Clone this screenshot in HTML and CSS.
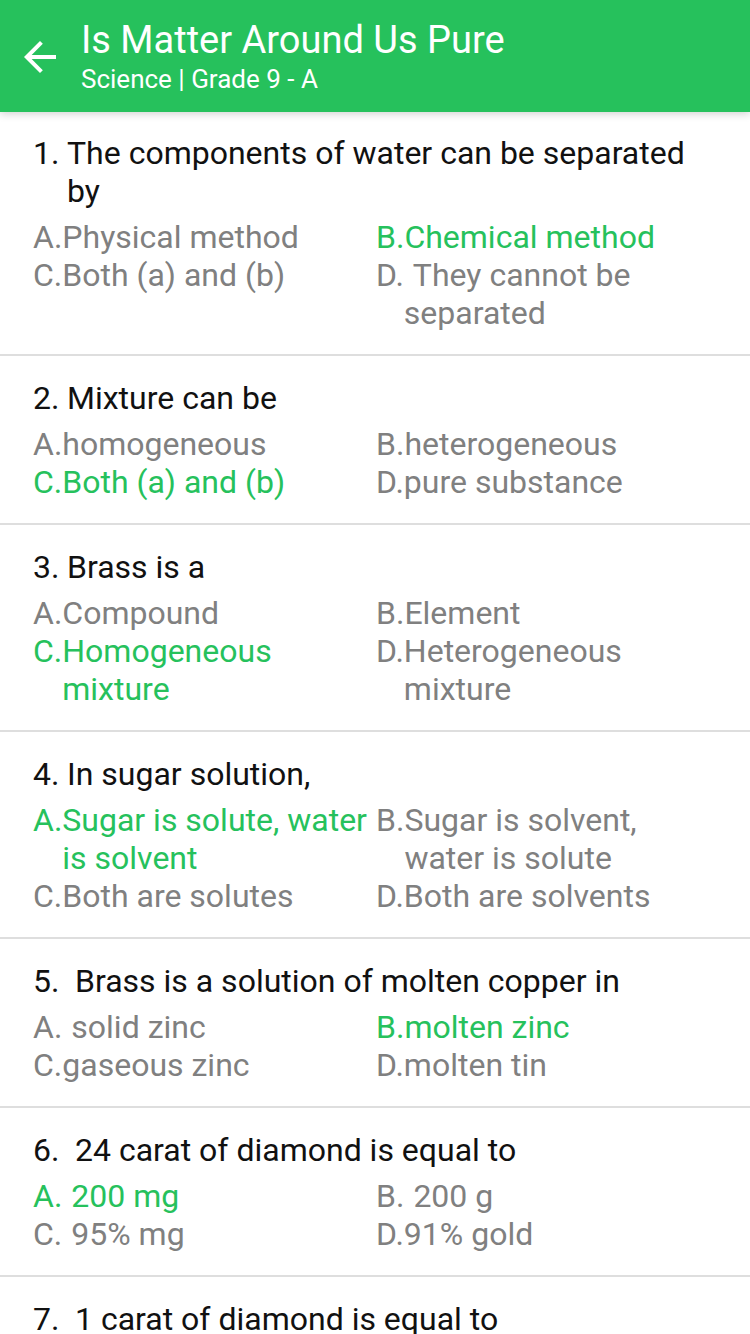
FILE: index.html
```html
<!DOCTYPE html>
<html>
<head>
<meta charset="utf-8">
<link rel="stylesheet" href="styles.css">
</head>
<body>
<header class="appbar">
  <svg class="back" viewBox="0 0 24 24" width="48" height="48"><path d="M20 11H7.83l5.59-5.59L12 4l-8 8 8 8 1.41-1.41L7.83 13H20v-2z" fill="#fff"/></svg>
  <div class="titles">
    <div class="title">Is Matter Around Us Pure</div>
    <div class="subtitle">Science | Grade 9 - A</div>
  </div>
</header>
<main class="list">
  <section class="item">
    <div class="q"><span class="qn">1.</span><span class="qt">The components of water can be separated by</span></div>
    <div class="opts">
      <div class="opt"><span class="ol">A.</span><span class="ot">Physical method</span></div>
      <div class="opt ok"><span class="ol">B.</span><span class="ot">Chemical method</span></div>
      <div class="opt"><span class="ol">C.</span><span class="ot">Both (a) and (b)</span></div>
      <div class="opt"><span class="ol">D.</span><span class="ot sp">They cannot be separated</span></div>
    </div>
  </section>
  <section class="item">
    <div class="q"><span class="qn">2.</span><span class="qt">Mixture can be</span></div>
    <div class="opts">
      <div class="opt"><span class="ol">A.</span><span class="ot">homogeneous</span></div>
      <div class="opt"><span class="ol">B.</span><span class="ot">heterogeneous</span></div>
      <div class="opt ok"><span class="ol">C.</span><span class="ot">Both (a) and (b)</span></div>
      <div class="opt"><span class="ol">D.</span><span class="ot">pure substance</span></div>
    </div>
  </section>
  <section class="item">
    <div class="q"><span class="qn">3.</span><span class="qt">Brass is a</span></div>
    <div class="opts">
      <div class="opt"><span class="ol">A.</span><span class="ot">Compound</span></div>
      <div class="opt"><span class="ol">B.</span><span class="ot">Element</span></div>
      <div class="opt ok"><span class="ol">C.</span><span class="ot">Homogeneous mixture</span></div>
      <div class="opt"><span class="ol">D.</span><span class="ot">Heterogeneous mixture</span></div>
    </div>
  </section>
  <section class="item">
    <div class="q"><span class="qn">4.</span><span class="qt">In sugar solution,</span></div>
    <div class="opts">
      <div class="opt ok"><span class="ol">A.</span><span class="ot">Sugar is solute, water is solvent</span></div>
      <div class="opt"><span class="ol">B.</span><span class="ot">Sugar is solvent, water is solute</span></div>
      <div class="opt"><span class="ol">C.</span><span class="ot">Both are solutes</span></div>
      <div class="opt"><span class="ol">D.</span><span class="ot">Both are solvents</span></div>
    </div>
  </section>
  <section class="item">
    <div class="q"><span class="qn">5.</span><span class="qt sp">Brass is a solution of molten copper in</span></div>
    <div class="opts">
      <div class="opt"><span class="ol">A.</span><span class="ot sp">solid zinc</span></div>
      <div class="opt ok"><span class="ol">B.</span><span class="ot">molten zinc</span></div>
      <div class="opt"><span class="ol">C.</span><span class="ot">gaseous zinc</span></div>
      <div class="opt"><span class="ol">D.</span><span class="ot">molten tin</span></div>
    </div>
  </section>
  <section class="item">
    <div class="q"><span class="qn">6.</span><span class="qt sp">24 carat of diamond is equal to</span></div>
    <div class="opts">
      <div class="opt ok"><span class="ol">A.</span><span class="ot sp">200 mg</span></div>
      <div class="opt"><span class="ol">B.</span><span class="ot sp">200 g</span></div>
      <div class="opt"><span class="ol">C.</span><span class="ot sp">95% mg</span></div>
      <div class="opt"><span class="ol">D.</span><span class="ot">91% gold</span></div>
    </div>
  </section>
  <section class="item">
    <div class="q"><span class="qn">7.</span><span class="qt sp">1 carat of diamond is equal to</span></div>
  </section>
</main>
</body>
</html>
```

FILE: styles.css
```css
* { box-sizing: border-box; }
html, body { margin: 0; padding: 0; }
body {
  width: 750px;
  height: 1334px;
  overflow: hidden;
  background: #fff;
  font-family: Roboto, "Noto Sans", sans-serif;
}
.appbar {
  height: 112px;
  background: #26c15c;
  display: flex;
  align-items: center;
  padding-left: 16px;
  gap: 17px;
  box-shadow: 0 2px 8px rgba(0,0,0,0.18);
  position: relative;
  z-index: 1;
}
.back { flex: none; margin-top: 2px; }
.titles { color: #fff; display: flex; flex-direction: column; margin-top: 4px; }
.title { font-size: 38px; line-height: 42px; }
.subtitle { font-size: 26px; line-height: 36px; }
.list { display: flex; flex-direction: column; }
.item {
  padding: 23px 31px 22px 33px;
  border-bottom: 2px solid #dedede;
  display: flex;
  flex-direction: column;
  gap: 8px;
}
.item:first-child { padding-top: 22px; }
.q {
  display: flex;
  font-size: 32px;
  line-height: 38px;
  color: #111;
}
.qn { flex: none; width: 34px; }
.qt.sp { text-indent: 8px; }
.opts {
  display: grid;
  grid-template-columns: 343px 343px;
}
.opt {
  display: flex;
  font-size: 32px;
  line-height: 38px;
  color: #808080;
}
.opt.ok { color: #26c15c; }
.ol { flex: none; }
.ot.sp { text-indent: 9px; }
```
